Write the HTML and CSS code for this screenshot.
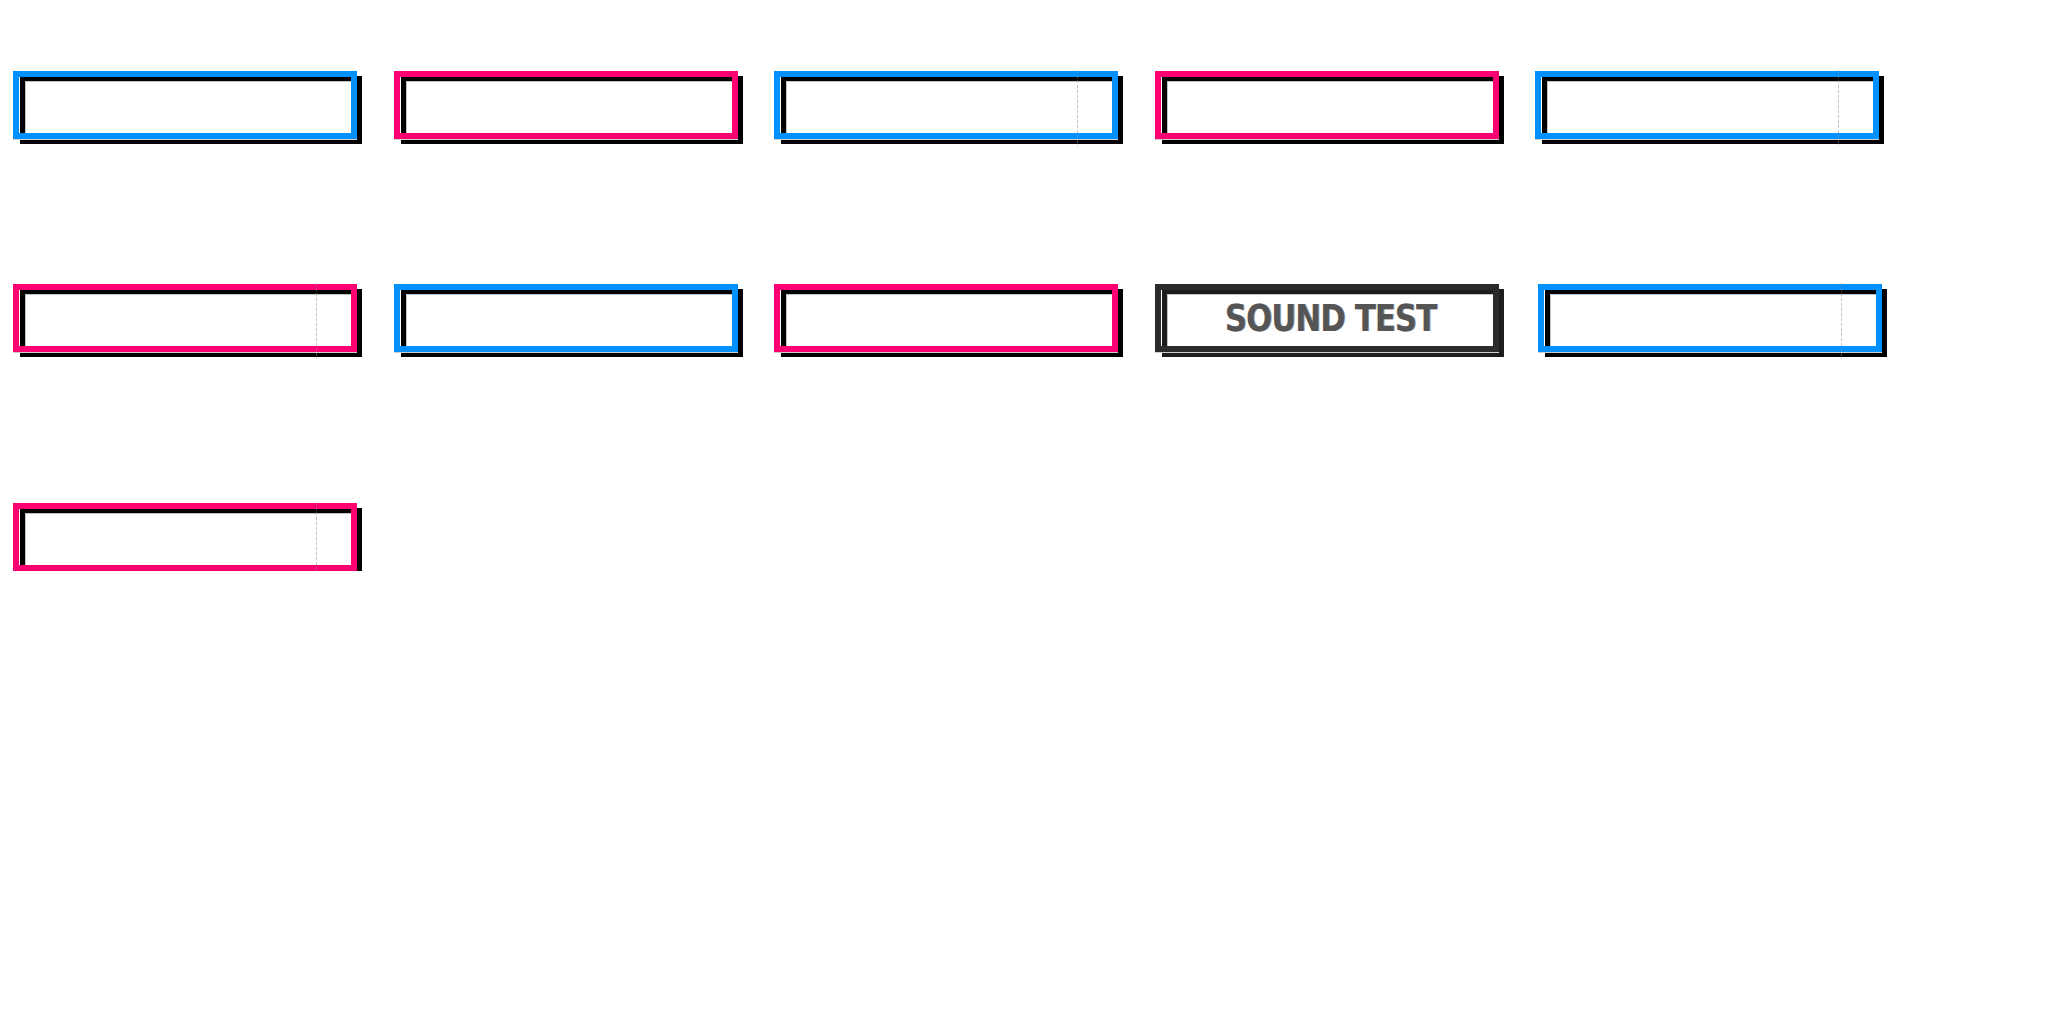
FILE: index.html
```html
<!DOCTYPE html>
<html lang="en">
<head>
<meta charset="utf-8">
<title>Buttons</title>
<link rel="stylesheet" href="styles.css">
</head>
<body>
<main class="board">
  <div class="row row-1">
    <button class="btn blue"></button>
    <button class="btn pink"></button>
    <button class="btn blue mark"></button>
    <button class="btn pink"></button>
    <button class="btn blue mark"></button>
  </div>
  <div class="row row-2">
    <button class="btn pink mark"></button>
    <button class="btn blue"></button>
    <button class="btn pink"></button>
    <button class="btn dark"><span class="label">SOUND TEST</span></button>
    <button class="btn blue mark shift"></button>
  </div>
  <div class="row row-3">
    <button class="btn pink mark"></button>
  </div>
</main>
</body>
</html>
```

FILE: styles.css
```css
html {
  margin: 0;
  padding: 0;
  background: #ffffff;
}

body {
  margin: 0;
  padding: 0;
}

.board {
  padding: 71px 0 0 13px;
  display: flex;
  flex-direction: column;
  font-family: "DejaVu Sans", "Liberation Sans", sans-serif;
}

.row {
  display: flex;
  column-gap: 36.5px;
}

.row-2 { margin-top: 145px; }
.row-3 { margin-top: 151px; }

.btn {
  position: relative;
  box-sizing: border-box;
  width: 344px;
  height: 68px;
  margin: 0;
  padding: 0;
  border: 6px solid #0090ff;
  background: transparent;
  box-shadow: 0 1px 0 #cfcfcf;
  display: flex;
  align-items: center;
  justify-content: center;
  cursor: pointer;
}

.btn::before {
  content: "";
  position: absolute;
  left: 1px;
  top: -1px;
  width: 342px;
  height: 68px;
  box-sizing: border-box;
  border: 5px solid #000000;
  box-shadow: inset 1px 1px 0 #c4c4c4;
  z-index: -1;
}

.btn.blue { border-color: #0090ff; }
.btn.pink { border-color: #ff0073; }
.btn.dark { border-color: #2b2b2b; }
.btn.dark::before { border-color: #1c1c1c; }

.btn.shift { margin-left: 3px; }

.btn.mark::after {
  content: "";
  position: absolute;
  left: 297px;
  top: -7px;
  width: 1px;
  height: 76px;
  background: repeating-linear-gradient(to bottom, rgba(140,140,140,0.5) 0 3px, rgba(140,140,140,0.12) 3px 5px);
}

.label {
  display: inline-block;
  position: relative;
  left: 4px;
  font-family: "DejaVu Sans", sans-serif;
  font-stretch: condensed;
  font-weight: bold;
  font-size: 38px;
  line-height: 1;
  letter-spacing: -1px;
  color: #555555;
  text-shadow: 1px 0 0 #9a9a9a;
  transform: scaleX(0.9);
}
```
